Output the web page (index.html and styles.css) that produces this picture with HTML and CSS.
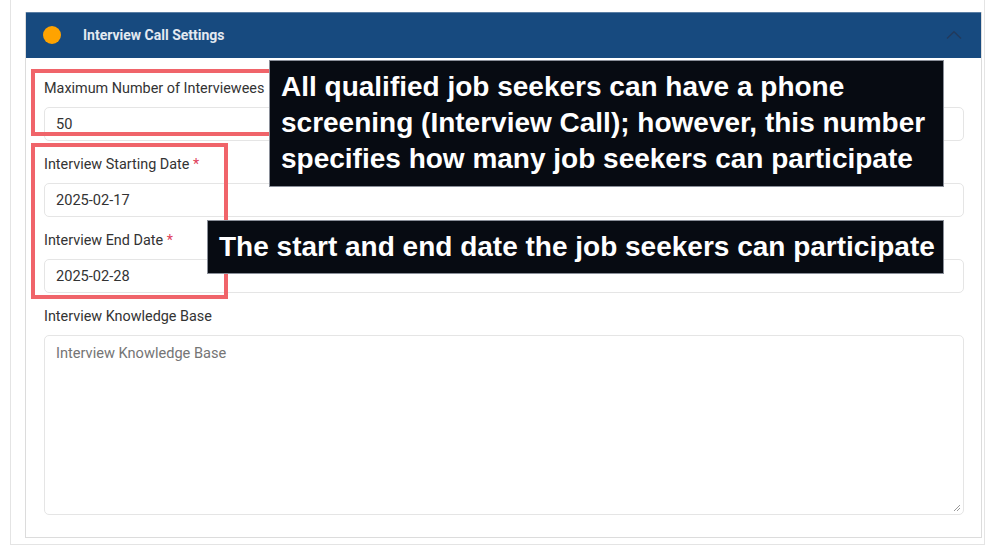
FILE: index.html
```html
<!DOCTYPE html>
<html>
<head>
<meta charset="utf-8">
<link rel="stylesheet" href="styles.css">
</head>
<body>
<div class="card">
  <div class="panel">
    <div class="panel-head">
      <span class="dot"></span>
      <span class="panel-title">Interview Call Settings</span>
      <svg class="chev" width="16" height="10" viewBox="0 0 16 10"><path d="M1 8.5 L8 1.8 L15 8.5" fill="none" stroke="#223a5c" stroke-width="1.4"/></svg>
    </div>
    <div class="panel-body">
      <div class="field">
        <label class="lbl">Maximum Number of Interviewees</label>
        <div class="input">50</div>
      </div>
      <div class="field">
        <label class="lbl">Interview Starting Date <span class="req">*</span></label>
        <div class="input">2025-02-17</div>
      </div>
      <div class="field">
        <label class="lbl">Interview End Date <span class="req">*</span></label>
        <div class="input">2025-02-28</div>
      </div>
      <div class="field">
        <label class="lbl">Interview Knowledge Base</label>
        <div class="textarea"><span class="ph">Interview Knowledge Base</span>
          <svg class="grip" width="9" height="9" viewBox="0 0 9 9"><path d="M8 2 L2 8 M8 5 L5 8" stroke="#999" stroke-width="1"/></svg>
        </div>
      </div>
    </div>
  </div>
</div>
<div class="hl hl-1"></div>
<div class="hl hl-2"></div>
<div class="tip tip-1">All qualified job seekers can have a phone screening (Interview Call); however, this number specifies how many job seekers can participate</div>
<div class="tip tip-2">The start and end date the job seekers can participate</div>
</body>
</html>
```
FILE: styles.css
```css
html, body { margin: 0; padding: 0; background: #fff; }
body { font-family: Roboto, "Noto Sans", Arial, sans-serif; width: 989px; height: 546px; overflow: hidden; position: relative; }
.card {
  margin-left: 10px;
  width: 975px;
  box-sizing: border-box;
  border: 1px solid #e4e4e4;
  border-top: none;
  padding: 12px 2px 6px 14px;
}
.panel { border: 1px solid #dcdcdc; border-top: none; }
.panel-head {
  height: 46px;
  box-sizing: border-box;
  background: #174a7f;
  border-top: 1px solid #5a7ea4;
  display: flex;
  align-items: center;
  padding: 0 19px 0 17px;
}
.dot { width: 18px; height: 18px; border-radius: 50%; background: #ffa300; margin-top: -2px; }
.panel-title { margin-left: 22px; color: #e3e9f1; font-size: 14px; font-weight: 700; flex: 1; margin-top: -1px; }
.chev { margin-top: -2px; }
.panel-body { padding: 22px 17px 22px 18px; display: flex; flex-direction: column; gap: 15px; }
.field { display: flex; flex-direction: column; }
.lbl { font-size: 14.4px; color: #333; line-height: 18px; margin-bottom: 9px; }
.req { color: #e0405a; }
.input {
  height: 34px; box-sizing: border-box;
  border: 1px solid #e5e5e5; border-radius: 5px;
  padding: 0 11px; display: flex; align-items: center;
  font-size: 14.6px; color: #333;
}
.textarea {
  height: 180px; box-sizing: border-box; position: relative;
  border: 1px solid #e5e5e5; border-radius: 5px;
  padding: 8px 11px; font-size: 14.6px;
}
.ph { color: #757575; }
.grip { position: absolute; right: 2px; bottom: 2px; }
.hl { position: absolute; border: 4px solid #f0646a; box-sizing: border-box; }
.hl-1 { left: 31px; top: 69px; width: 250px; height: 67px; }
.hl-2 { left: 31px; top: 143px; width: 197px; height: 156px; }
.tip {
  position: absolute; background: #070b12; color: #fff;
  font-family: "Liberation Sans", Arial, sans-serif; font-weight: 700;
  font-size: 28px; line-height: 36px;
  border: 1px solid #8a8f99; box-sizing: border-box;
}
.tip-1 { left: 269px; top: 60px; width: 675px; height: 127px; padding: 8px 6px 8px 11px; }
.tip-2 { left: 207px; top: 220px; width: 737px; height: 54px; padding: 8px 6px 8px 11px; white-space: nowrap; }
```
